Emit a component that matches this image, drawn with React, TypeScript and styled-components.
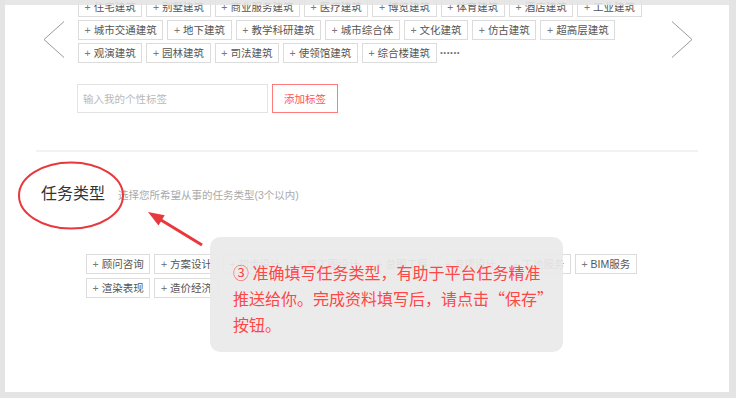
import React from 'react';
import styled, { createGlobalStyle } from 'styled-components';

const GlobalStyle = createGlobalStyle`
  html, body {
    margin: 0;
    padding: 0;
  }
  body {
    background: #e4e4e4;
    font-family: "Liberation Sans", "Noto Sans CJK SC", sans-serif;
  }
`;

const Frame = styled.div`
  position: relative;
  width: 736px;
  height: 398px;
  box-sizing: border-box;
  padding: 0 7px 6px 5px;
`;

// the grey top edge of the window sits over the scrolled content
const TopShade = styled.div`
  position: absolute;
  top: 0;
  left: 0;
  right: 0;
  height: 5px;
  background: rgba(228, 228, 228, 0.88);
`;

const Panel = styled.div`
  position: relative;
  height: 100%;
  background: #fff;
  overflow: hidden;
`;

//======================== carousel of building tags ========================

const Carousel = styled.div`
  display: grid;
  grid-template-columns: 73px 1fr 73px;
  margin-top: -3px;
`;

const ArrowCell = styled.div<{ $side: 'left' | 'right' }>`
  display: flex;
  align-items: flex-start;
  justify-content: ${(p) => (p.$side === 'left' ? 'flex-end' : 'flex-start')};
  padding-top: 24px;
  ${(p) => (p.$side === 'left' ? 'padding-right: 13px;' : 'padding-left: 15px;')}
`;

const TagRows = styled.div`
  display: flex;
  flex-direction: column;
  row-gap: 3px;
`;

const TagRow = styled.div`
  display: flex;
  align-items: center;
  column-gap: 4px;
`;

const Tag = styled.span`
  display: inline-block;
  box-sizing: border-box;
  height: 20px;
  line-height: 18px;
  padding: 0 5.6px;
  border: 1px solid #dcdcdc;
  font-size: 10.5px;
  color: #555;
  white-space: nowrap;
`;

const Plus = styled.span`
  color: #777;
  margin-right: 3px;
`;

const More = styled.span`
  font-size: 12px;
  font-weight: bold;
  color: #777;
  letter-spacing: -0.6px;
  margin-left: -1px;
`;

const InputRow = styled.div`
  display: flex;
  column-gap: 4px;
  margin: 21px 0 0 72px;
`;

const TagInput = styled.input`
  box-sizing: border-box;
  width: 191px;
  height: 29px;
  padding: 0 5px;
  border: 1px solid #e3e3e3;
  outline: none;
  font-family: inherit;
  font-size: 10.5px;
  color: #555;
  &::placeholder {
    color: #b9b9b9;
  }
`;

const AddButton = styled.button`
  box-sizing: border-box;
  width: 66px;
  height: 29px;
  border: 1px solid #ff7a7a;
  background: #fff;
  color: #ff5252;
  font-family: inherit;
  font-size: 10.5px;
  padding: 0;
`;

const Divider = styled.div`
  height: 2px;
  margin: 37px 31px 0;
  background: #f2f2f2;
`;

//======================== task type ========================

const TaskSection = styled.div`
  padding-left: 36px;
`;

const SectionHead = styled.div`
  display: flex;
  align-items: baseline;
  margin-top: 32px;
`;

const Title = styled.h3`
  margin: 0;
  font-size: 16px;
  line-height: 20px;
  font-weight: normal;
  color: #333;
`;

const Hint = styled.span`
  margin-left: 13px;
  font-size: 10.5px;
  color: #aaa;
`;

const TaskTags = styled.div`
  display: flex;
  flex-direction: column;
  row-gap: 4px;
  margin: 50px 0 0 45px;
`;

//======================== annotations ========================

const Overlay = styled.svg<{ $left: number; $top: number }>`
  position: absolute;
  left: ${(p) => p.$left}px;
  top: ${(p) => p.$top}px;
  overflow: visible;
`;

const Tooltip = styled.div`
  position: absolute;
  left: 205px;
  top: 237px;
  width: 353px;
  height: 115px;
  box-sizing: border-box;
  padding: 22px 0 0 23px;
  border-radius: 10px;
  background: rgba(234, 234, 234, 0.93);
  color: #ff4646;
  font-family: "Noto Sans CJK SC", sans-serif;
  font-size: 16px;
  line-height: 26px;
  white-space: nowrap;
`;

const buildingRows = [
  ['住宅建筑', '别墅建筑', '商业服务建筑', '医疗建筑', '博览建筑', '体育建筑', '酒店建筑', '工业建筑'],
  ['城市交通建筑', '地下建筑', '教学科研建筑', '城市综合体', '文化建筑', '仿古建筑', '超高层建筑'],
  ['观演建筑', '园林建筑', '司法建筑', '使领馆建筑', '综合楼建筑'],
];

const taskRows = [
  ['顾问咨询', '方案设计', '初步设计', '施工图设计', '总图工程', '专项设计', '工地服务', 'BIM服务'],
  ['渲染表现', '造价经济'],
];

function TagItem({ label }: { label: string }) {
  return (
    <Tag>
      <Plus>+</Plus>
      {label}
    </Tag>
  );
}

function Chevron({ side }: { side: 'left' | 'right' }) {
  const d = side === 'left' ? 'M21 0.5 L1 18.5 L21 36.5' : 'M1 0.5 L21 18.5 L1 36.5';
  return (
    <svg width="22" height="38" viewBox="0 0 22 38">
      <path d={d} fill="none" stroke="#999" strokeWidth="1" />
    </svg>
  );
}

export default function App() {
  return (
    <>
      <GlobalStyle />
      <Frame>
        <Panel>
          <Carousel>
            <ArrowCell $side="left">
              <Chevron side="left" />
            </ArrowCell>
            <TagRows>
              {buildingRows.map((row, i) => (
                <TagRow key={i}>
                  {row.map((label) => (
                    <TagItem key={label} label={label} />
                  ))}
                  {i === buildingRows.length - 1 && <More>······</More>}
                </TagRow>
              ))}
            </TagRows>
            <ArrowCell $side="right">
              <Chevron side="right" />
            </ArrowCell>
          </Carousel>

          <InputRow>
            <TagInput placeholder="输入我的个性标签" />
            <AddButton>添加标签</AddButton>
          </InputRow>

          <Divider />

          <TaskSection>
            <SectionHead>
              <Title>任务类型</Title>
              <Hint>选择您所希望从事的任务类型(3个以内)</Hint>
            </SectionHead>
            <TaskTags>
              {taskRows.map((row, i) => (
                <TagRow key={i}>
                  {row.map((label) => (
                    <TagItem key={label} label={label} />
                  ))}
                </TagRow>
              ))}
            </TaskTags>
          </TaskSection>

          <Overlay $left={12} $top={161} width="108" height="70" viewBox="0 0 108 70">
            <ellipse cx="54" cy="34.5" rx="52" ry="33" fill="none" stroke="#e8383d" strokeWidth="2" />
          </Overlay>

          <Overlay $left={135} $top={205} width="70" height="45" viewBox="0 0 70 45">
            <line x1="21" y1="15" x2="62" y2="40" stroke="#e8383d" strokeWidth="3" />
            <polygon points="8,7 18.5,20.4 24.7,10.2" fill="#e8383d" />
          </Overlay>

          <Tooltip>
            ③ 准确填写任务类型，有助于平台任务精准
            <br />
            推送给你。完成资料填写后，请点击“保存”
            <br />
            按钮。
          </Tooltip>
        </Panel>
        <TopShade />
      </Frame>
    </>
  );
}
